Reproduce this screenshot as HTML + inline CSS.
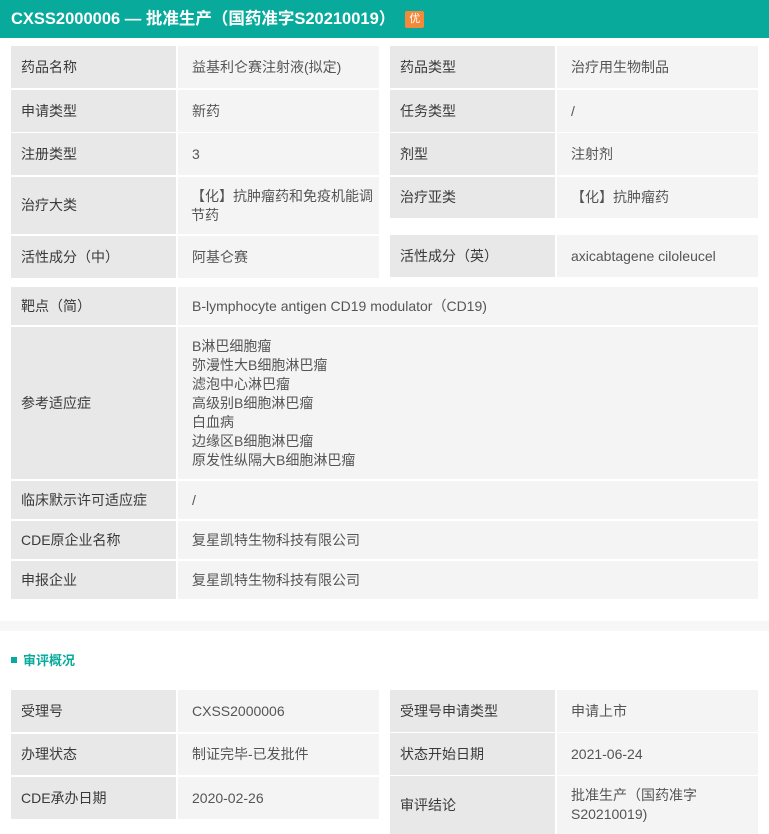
<!DOCTYPE html>
<html><head><meta charset="utf-8">
<style>
*{margin:0;padding:0;box-sizing:border-box}
body{width:769px;height:827px;overflow:hidden;background:#fff;position:relative;font-family:"Liberation Sans","Noto Sans CJK SC",sans-serif;font-size:14px}
.hd{position:absolute;left:0;top:0;width:769px;height:38px;background:#08aa9c;color:#fff;font-weight:bold;font-size:16.5px;line-height:38px;padding-left:11px;white-space:nowrap}
.yo{display:inline-block;background:#f5893a;color:#fff;font-size:11px;font-weight:normal;width:19px;height:17px;line-height:17px;text-align:center;border-radius:2px;vertical-align:2px;margin-left:10px}
.c{position:absolute;display:flex;align-items:center;line-height:19px;color:#555;background:#f4f4f4;padding-left:14px;padding-right:0}
.l{background:#e8e8e8;color:#3a3a3a;padding-left:10px}
.band{position:absolute;left:0;top:621px;width:769px;height:10px;background:#f7f7f7}
.sec{position:absolute;left:11px;top:652px;color:#08aa9c;font-weight:bold;font-size:13px;line-height:18px}
.sec:before{content:"";display:inline-block;width:6px;height:6px;background:#08aa9c;margin-right:6px;vertical-align:2px}
</style></head><body>
<div class="hd">CXSS2000006 — 批准生产（国药准字S20210019）<span class="yo">优</span></div>

<div class="c l" style="left:11px;top:46px;width:165px;height:42px">药品名称</div>
<div class="c" style="left:178px;top:46px;width:201px;height:42px">益基利仑赛注射液(拟定)</div>
<div class="c l" style="left:11px;top:90px;width:165px;height:42px">申请类型</div>
<div class="c" style="left:178px;top:90px;width:201px;height:42px">新药</div>
<div class="c l" style="left:11px;top:133px;width:165px;height:42px">注册类型</div>
<div class="c" style="left:178px;top:133px;width:201px;height:42px">3</div>
<div class="c l" style="left:11px;top:177px;width:165px;height:57px">治疗大类</div>
<div class="c" style="left:178px;top:177px;width:201px;height:57px;padding-left:13px"><span>【化】抗肿瘤药和免疫机能调<br>节药</span></div>
<div class="c l" style="left:11px;top:236px;width:165px;height:42px">活性成分（中）</div>
<div class="c" style="left:178px;top:236px;width:201px;height:42px">阿基仑赛</div>

<div class="c l" style="left:390px;top:46px;width:165px;height:42px">药品类型</div>
<div class="c" style="left:557px;top:46px;width:201px;height:42px">治疗用生物制品</div>
<div class="c l" style="left:390px;top:90px;width:165px;height:42px">任务类型</div>
<div class="c" style="left:557px;top:90px;width:201px;height:42px">/</div>
<div class="c l" style="left:390px;top:133px;width:165px;height:42px">剂型</div>
<div class="c" style="left:557px;top:133px;width:201px;height:42px">注射剂</div>
<div class="c l" style="left:390px;top:177px;width:165px;height:41px">治疗亚类</div>
<div class="c" style="left:557px;top:177px;width:201px;height:41px">【化】抗肿瘤药</div>
<div class="c l" style="left:390px;top:235px;width:165px;height:42px">活性成分（英）</div>
<div class="c" style="left:557px;top:235px;width:201px;height:42px">axicabtagene ciloleucel</div>

<div class="c l" style="left:11px;top:287px;width:165px;height:38px">靶点（简）</div>
<div class="c" style="left:178px;top:287px;width:580px;height:38px">B-lymphocyte antigen CD19 modulator（CD19)</div>
<div class="c l" style="left:11px;top:327px;width:165px;height:152px">参考适应症</div>
<div class="c" style="left:178px;top:327px;width:580px;height:152px">B淋巴细胞瘤<br>弥漫性大B细胞淋巴瘤<br>滤泡中心淋巴瘤<br>高级别B细胞淋巴瘤<br>白血病<br>边缘区B细胞淋巴瘤<br>原发性纵隔大B细胞淋巴瘤</div>
<div class="c l" style="left:11px;top:481px;width:165px;height:38px">临床默示许可适应症</div>
<div class="c" style="left:178px;top:481px;width:580px;height:38px">/</div>
<div class="c l" style="left:11px;top:521px;width:165px;height:38px">CDE原企业名称</div>
<div class="c" style="left:178px;top:521px;width:580px;height:38px">复星凯特生物科技有限公司</div>
<div class="c l" style="left:11px;top:561px;width:165px;height:38px">申报企业</div>
<div class="c" style="left:178px;top:561px;width:580px;height:38px">复星凯特生物科技有限公司</div>

<div class="band"></div>
<div class="sec">审评概况</div>

<div class="c l" style="left:11px;top:690px;width:165px;height:42px">受理号</div>
<div class="c" style="left:178px;top:690px;width:201px;height:42px">CXSS2000006</div>
<div class="c l" style="left:11px;top:734px;width:165px;height:41px">办理状态</div>
<div class="c" style="left:178px;top:734px;width:201px;height:41px">制证完毕-已发批件</div>
<div class="c l" style="left:11px;top:777px;width:165px;height:42px">CDE承办日期</div>
<div class="c" style="left:178px;top:777px;width:201px;height:42px">2020-02-26</div>

<div class="c l" style="left:390px;top:690px;width:165px;height:42px">受理号申请类型</div>
<div class="c" style="left:557px;top:690px;width:201px;height:42px">申请上市</div>
<div class="c l" style="left:390px;top:733px;width:165px;height:42px">状态开始日期</div>
<div class="c" style="left:557px;top:733px;width:201px;height:42px">2021-06-24</div>
<div class="c l" style="left:390px;top:776px;width:165px;height:58px">审评结论</div>
<div class="c" style="left:557px;top:776px;width:201px;height:58px">批准生产（国药准字S20210019)</div>
</body></html>
